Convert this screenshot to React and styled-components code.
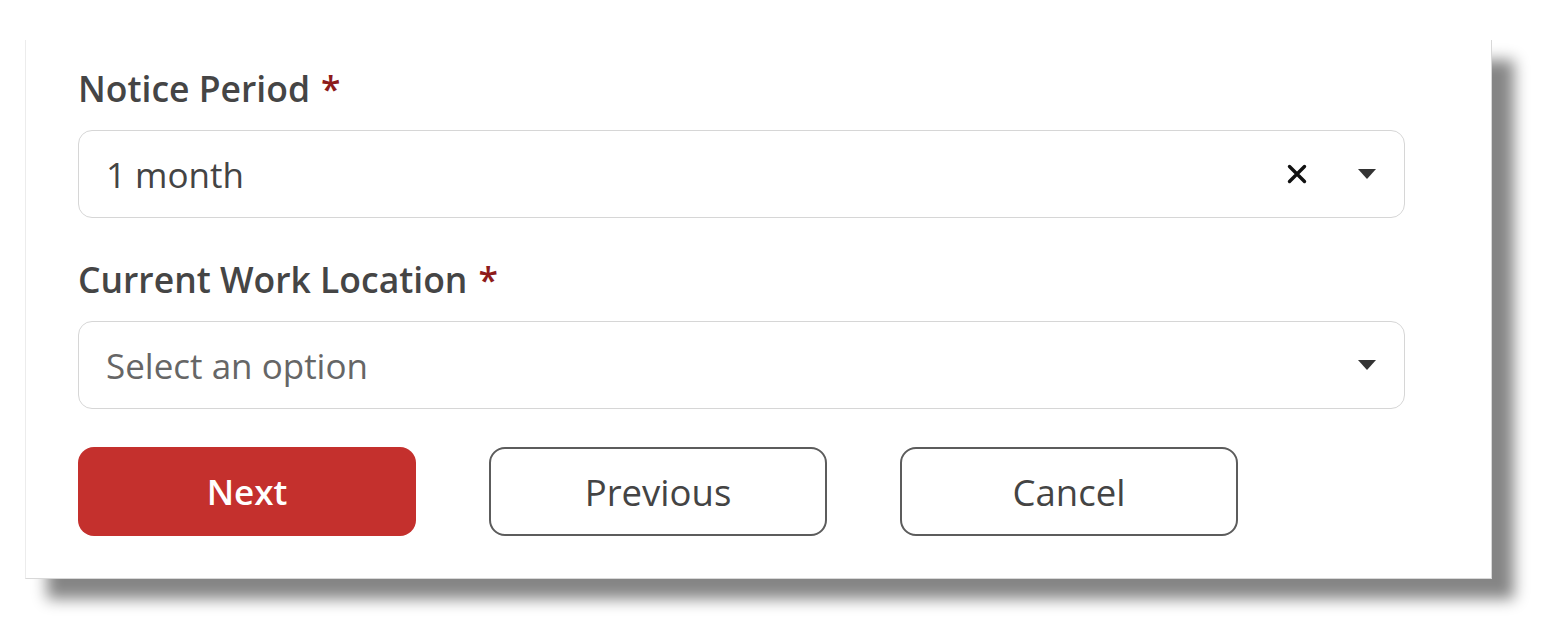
import React from "react";
import styled, { createGlobalStyle } from "styled-components";

const Global = createGlobalStyle`
  html, body { margin: 0; padding: 0; background: #ffffff; }
  body { font-family: "Open Sans", "Noto Sans", sans-serif; }
  * { box-sizing: border-box; }
`;

const Page = styled.div`
  padding: 40px 0 0 25px;
  width: 1548px;
  height: 626px;
  overflow: hidden;
`;

const Card = styled.div`
  width: 1467px;
  background: #ffffff;
  border-left: 1px solid #ececec;
  border-right: 1px solid #d8d8d8;
  border-bottom: 1px solid #d8d8d8;
  box-shadow: 22px 20px 14px rgba(0, 0, 0, 0.48);
  padding: 26px 86px 42px 52px;
  display: flex;
  flex-direction: column;
`;

const Field = styled.div`
  display: flex;
  flex-direction: column;
  margin-bottom: ${(p) => p.$mb}px;
`;

const Label = styled.label`
  font-size: 35.5px;
  line-height: 44px;
  font-weight: 600;
  color: #454545;
  margin-bottom: 20px;
`;

const Required = styled.span`
  color: #8e1b1b;
  margin-left: 11px;
`;

const Select = styled.div`
  height: 88px;
  border: 1.5px solid #d6d6d6;
  border-radius: 14px;
  display: flex;
  align-items: center;
  padding: 0 28px 0 27px;
  background: #fff;
`;

const Value = styled.span`
  flex: 1;
  font-size: 35px;
  font-weight: 400;
  color: ${(p) => (p.$placeholder ? "#666666" : "#444444")};
`;

const IconSlot = styled.span`
  display: flex;
  align-items: center;
  justify-content: center;
  margin-left: ${(p) => p.$ml}px;
`;

const Actions = styled.div`
  display: flex;
  gap: 73px;
`;

const Button = styled.button`
  width: 338px;
  height: 89px;
  border-radius: 16px;
  font-family: "Open Sans", "Noto Sans", sans-serif;
  font-size: ${(p) => (p.$primary ? 35 : 36.5)}px;
  font-weight: ${(p) => (p.$primary ? 600 : 400)};
  color: ${(p) => (p.$primary ? "#ffffff" : "#444444")};
  background: ${(p) => (p.$primary ? "#c4302d" : "#ffffff")};
  border: ${(p) => (p.$primary ? "none" : "2px solid #5c5c5c")};
  cursor: pointer;
  padding: 0;
`;

const ClearIcon = () => (
  <svg width="20" height="20" viewBox="0 0 20 20">
    <path d="M2.5 2.5 L17.5 17.5 M17.5 2.5 L2.5 17.5" stroke="#111" strokeWidth="3.4" strokeLinecap="round" />
  </svg>
);

const Caret = () => (
  <svg width="18" height="10" viewBox="0 0 18 10">
    <path d="M0 0 H18 L9 10 Z" fill="#333" />
  </svg>
);

export default function App() {
  return (
    <>
      <Global />
      <Page>
        <Card>
          <Field $mb={39}>
            <Label>
              Notice Period<Required>*</Required>
            </Label>
            <Select>
              <Value>1 month</Value>
              <IconSlot $ml={0}>
                <ClearIcon />
              </IconSlot>
              <IconSlot $ml={51}>
                <Caret />
              </IconSlot>
            </Select>
          </Field>
          <Field $mb={38}>
            <Label>
              Current Work Location<Required>*</Required>
            </Label>
            <Select>
              <Value $placeholder>Select an option</Value>
              <IconSlot $ml={0}>
                <Caret />
              </IconSlot>
            </Select>
          </Field>
          <Actions>
            <Button $primary>Next</Button>
            <Button>Previous</Button>
            <Button>Cancel</Button>
          </Actions>
        </Card>
      </Page>
    </>
  );
}
